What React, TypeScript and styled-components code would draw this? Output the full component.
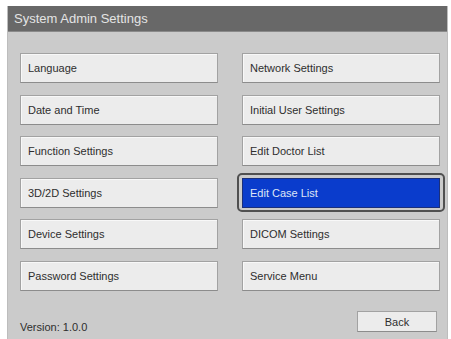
import React, {FC} from 'react';
import styled, {createGlobalStyle, css} from 'styled-components';

const GlobalStyle = createGlobalStyle`
  html, body {
    margin: 0;
    padding: 0;
    background: #ffffff;
    font-family: "Liberation Sans", Arial, sans-serif;
  }
`;

const Page = styled.div`
  width: 451px;
  height: 339px;
  padding: 6px 3px 0 7px;
  box-sizing: border-box;
  overflow: hidden;
`;

const Panel = styled.div`
  display: flex;
  flex-direction: column;
  height: 340px;
  background-color: #cbcbcb;
  border-left: 1px solid #bdbdbd;
  border-right: 1px solid #bdbdbd;
`;

const TitleBar = styled.div`
  height: 25px;
  display: flex;
  align-items: center;
  padding-left: 6px;
  background-color: #686868;
  color: #e4e4e4;
  font-size: 13px;
  border-bottom: 1px solid #8a8a8a;
`;

const Body = styled.div`
  display: flex;
  flex-direction: column;
  flex: 1;
  padding: 21px 8px 0 12px;
`;

const Grid = styled.div`
  display: grid;
  grid-template-columns: 198px 198px;
  grid-auto-rows: 30px;
  column-gap: 24px;
  row-gap: 11.6px;
`;

const Item = styled.div<{$active?: boolean}>`
  position: relative;
  display: flex;
  align-items: center;
  padding-left: 7px;
  font-size: 11px;
  border: 1px solid #a2a2a2;
  border-bottom-color: #8c8c8c;
  background-color: #ececec;
  color: #2e2e2e;
  box-shadow: inset 1px 1px 0 #f8f8f8;
  ${p => p.$active && css`
    background-color: #0a3ccc;
    color: #dfe6f6;
    border-color: #1b2f7a;
    box-shadow: none;
    &::before {
      content: '';
      position: absolute;
      left: -6px;
      right: -6px;
      top: -6px;
      bottom: -5px;
      border: 2px solid #505050;
      border-radius: 5px;
    }
  `}
`;

const Footer = styled.div`
  display: flex;
  align-items: center;
  justify-content: space-between;
  margin-top: 20px;
  padding-right: 2px;
`;

const Version = styled.div`
  font-size: 11px;
  color: #2e2e2e;
  padding-top: 10px;
`;

const BackButton = styled.div`
  width: 80px;
  height: 21px;
  display: flex;
  align-items: center;
  justify-content: center;
  font-size: 11px;
  color: #2e2e2e;
  background-color: #ececec;
  border: 1px solid #a2a2a2;
  border-bottom-color: #8c8c8c;
  box-sizing: border-box;
`;

const items: [string, boolean?][] = [
  ['Language'],
  ['Network Settings'],
  ['Date and Time'],
  ['Initial User Settings'],
  ['Function Settings'],
  ['Edit Doctor List'],
  ['3D/2D Settings'],
  ['Edit Case List', true],
  ['Device Settings'],
  ['DICOM Settings'],
  ['Password Settings'],
  ['Service Menu'],
];

const App: FC = () => (
  <Page>
    <GlobalStyle/>
    <Panel>
      <TitleBar>System Admin Settings</TitleBar>
      <Body>
        <Grid>
          {items.map(([label, active]) => (
            <Item key={label} $active={active}>{label}</Item>
          ))}
        </Grid>
        <Footer>
          <Version>Version: 1.0.0</Version>
          <BackButton>Back</BackButton>
        </Footer>
      </Body>
    </Panel>
  </Page>
);

export default App;
